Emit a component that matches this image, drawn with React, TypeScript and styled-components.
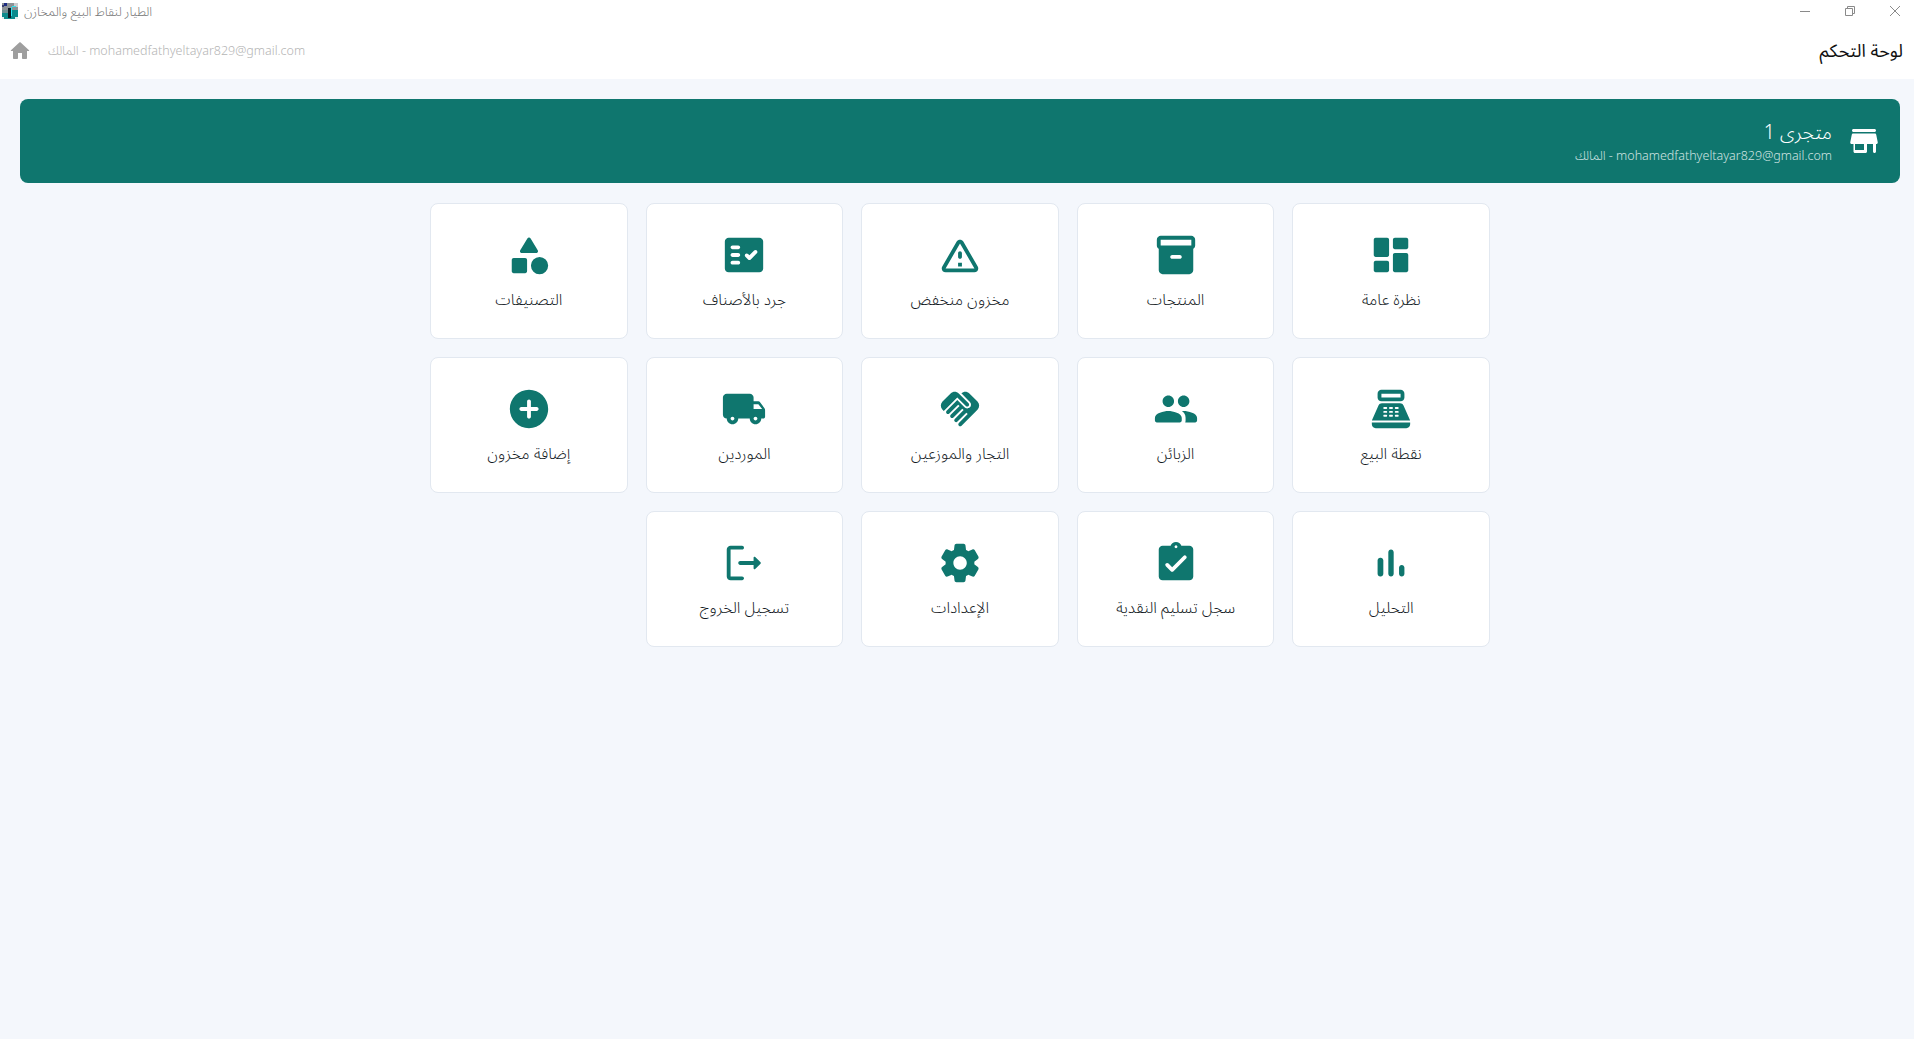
import React from 'react';
import styled, { createGlobalStyle } from 'styled-components';

const TEAL = '#0f766e';
const FONT = `"Noto Sans Arabic", "Cairo", "Open Sans", "DejaVu Sans", sans-serif`;

const Global = createGlobalStyle`
  html, body { margin: 0; padding: 0; height: 100%; overflow: hidden; background: #f4f7fc; }
  #root { width: 1914px; height: 1039px; overflow: hidden; }
`;

const Page = styled.div`
  width: 1920px;
  height: 1039px;
  display: flex;
  flex-direction: column;
  background: #f4f7fc;
  font-family: ${FONT};
`;
const TitleBar = styled.div`
  width: 1914px;
  height: 22px;
  background: #fff;
  display: flex;
  align-items: center;
  padding-left: 2px;
  box-sizing: border-box;
  gap: 6px;
`;
const TitleText = styled.span`
  margin-top: 2px;
  font-size: 12.5px;
  line-height: 20px;
  font-weight: 300;
  color: #757575;
  direction: rtl;
`;
const Controls = styled.div`
  margin-left: auto;
  display: flex;
  align-items: center;
  gap: 35px;
  padding-right: 14px;
  color: #8a8a8a;
`;
const AppBar = styled.div`
  width: 1914px;
  height: 57px;
  box-sizing: border-box;
  background: #fff;
  display: flex;
  align-items: center;
  padding: 1px 11px 0 8px;
`;
const Identity = styled.span`
  margin-left: 16px;
  font-size: 12.5px;
  font-weight: 300;
  color: #b5b5b5;
`;
const PageTitle = styled.h1`
  margin: 0 0 0 auto;
  font-size: 18px;
  font-weight: 400;
  color: #111;
  direction: rtl;
`;
const Content = styled.main`
  padding: 20px;
  display: flex;
  flex-direction: column;
  align-items: center;
`;
const Banner = styled.section`
  align-self: stretch;
  height: 84px;
  box-sizing: border-box;
  background: ${TEAL};
  border-radius: 8px;
  display: flex;
  align-items: center;
  justify-content: flex-end;
  padding-right: 18px;
  gap: 14px;
  color: #fff;
`;
const StoreInfo = styled.div`
  display: flex;
  flex-direction: column;
  align-items: flex-end;
  gap: 2px;
  padding-top: 1px;
`;
const StoreName = styled.div`
  font-size: 19.5px;
  font-weight: 300;
  line-height: 27px;
  direction: rtl;
`;
const StoreMail = styled.div`
  font-size: 12.5px;
  font-weight: 300;
  line-height: 16px;
  color: #cfe3e1;
`;
const Grid = styled.div`
  width: 1060px;
  margin-top: 20px;
  display: grid;
  grid-template-columns: repeat(5, 1fr);
  gap: 18px;
  direction: rtl;
`;
const Card = styled.button`
  height: 136px;
  box-sizing: border-box;
  padding: 28px 0 0;
  background: #fff;
  border: 1px solid #e2e8f0;
  border-radius: 8px;
  display: flex;
  flex-direction: column;
  align-items: center;
  gap: 10px;
  font-family: inherit;
`;
const Label = styled.span`
  font-size: 15.8px;
  font-weight: 300;
  line-height: 24px;
  color: #111722;
`;
const Glyph = styled.svg<{ $size: number; $color: string }>`
  width: ${p => p.$size}px;
  height: ${p => p.$size}px;
  fill: ${p => p.$color};
  flex: none;
`;

const Icon = ({ d, size = 46, color = TEAL }: { d: string; size?: number; color?: string }) => (
  <Glyph viewBox="0 0 24 24" $size={size} $color={color}><path d={d} /></Glyph>
);

const P = {
  dashboard: 'M4 13h6c.55 0 1-.45 1-1V4c0-.55-.45-1-1-1H4c-.55 0-1 .45-1 1v8c0 .55.45 1 1 1zm0 8h6c.55 0 1-.45 1-1v-4c0-.55-.45-1-1-1H4c-.55 0-1 .45-1 1v4c0 .55.45 1 1 1zm10 0h6c.55 0 1-.45 1-1v-8c0-.55-.45-1-1-1h-6c-.55 0-1 .45-1 1v8c0 .55.45 1 1 1zM13 4v4c0 .55.45 1 1 1h6c.55 0 1-.45 1-1V4c0-.55-.45-1-1-1h-6c-.55 0-1 .45-1 1z',
  inventory: 'M20 2H4c-1 0-2 .9-2 2v3.01c0 .72.43 1.34 1 1.69V20c0 1.1 1.1 2 2 2h14c.9 0 2-.9 2-2V8.7c.57-.35 1-.97 1-1.69V4c0-1.1-1-2-2-2zm-6 12h-4c-.55 0-1-.45-1-1s.45-1 1-1h4c.55 0 1 .45 1 1s-.45 1-1 1zm6-7H4V4h16v3z',
  warning: 'M12 5.99 19.53 19H4.47L12 5.99M2.74 18c-.77 1.33.19 3 1.73 3h15.06c1.54 0 2.5-1.67 1.73-3L13.73 4.99c-.77-1.33-2.69-1.33-3.46 0L2.74 18zM11 11v2c0 .55.45 1 1 1s1-.45 1-1v-2c0-.55-.45-1-1-1s-1 .45-1 1zm0 5h2v2h-2z',
  fact: 'M20 3H4c-1.1 0-2 .9-2 2v14c0 1.1.9 2 2 2h16c1.1 0 2-.9 2-2V5c0-1.1-.9-2-2-2zM9 17H6c-.55 0-1-.45-1-1s.45-1 1-1h3c.55 0 1 .45 1 1s-.45 1-1 1zm0-4H6c-.55 0-1-.45-1-1s.45-1 1-1h3c.55 0 1 .45 1 1s-.45 1-1 1zm0-4H6c-.55 0-1-.45-1-1s.45-1 1-1h3c.55 0 1 .45 1 1s-.45 1-1 1zm9.7 2.12-3.17 3.17c-.39.39-1.03.39-1.42 0l-1.41-1.42c-.39-.39-.39-1.02 0-1.41s1.02-.39 1.41 0l.71.71 2.47-2.47c.39-.39 1.02-.39 1.41 0l.01.01c.38.39.38 1.03-.01 1.41z',
  category: 'M11.15 3.4 7.43 9.48c-.41.66.07 1.52.85 1.52h7.43c.78 0 1.26-.86.85-1.52L12.85 3.4c-.39-.64-1.31-.64-1.7 0zM13 17.5a4.5 4.5 0 1 0 9 0a4.5 4.5 0 1 0-9 0zM4 21.5h6c.55 0 1-.45 1-1v-6c0-.55-.45-1-1-1H4c-.55 0-1 .45-1 1v6c0 .55.45 1 1 1z',
  pos: 'M17 2H7c-1.1 0-2 .9-2 2v2c0 1.1.9 2 2 2h10c1.1 0 2-.9 2-2V4c0-1.1-.9-2-2-2zm0 4H7V4h10v2zm3 16H4c-1.1 0-2-.9-2-2v-1h20v1c0 1.1-.9 2-2 2zm-1.47-11.81C18.21 9.47 17.49 9 16.7 9H7.3c-.79 0-1.51.47-1.83 1.19L2 18h20l-3.47-7.81zM9.5 16h-1c-.28 0-.5-.22-.5-.5s.22-.5.5-.5h1c.28 0 .5.22.5.5s-.22.5-.5.5zm0-2h-1c-.28 0-.5-.22-.5-.5s.22-.5.5-.5h1c.28 0 .5.22.5.5s-.22.5-.5.5zm0-2h-1c-.28 0-.5-.22-.5-.5s.22-.5.5-.5h1c.28 0 .5.22.5.5s-.22.5-.5.5zm3 4h-1c-.28 0-.5-.22-.5-.5s.22-.5.5-.5h1c.28 0 .5.22.5.5s-.22.5-.5.5zm0-2h-1c-.28 0-.5-.22-.5-.5s.22-.5.5-.5h1c.28 0 .5.22.5.5s-.22.5-.5.5zm0-2h-1c-.28 0-.5-.22-.5-.5s.22-.5.5-.5h1c.28 0 .5.22.5.5s-.22.5-.5.5zm3 4h-1c-.28 0-.5-.22-.5-.5s.22-.5.5-.5h1c.28 0 .5.22.5.5s-.22.5-.5.5zm0-2h-1c-.28 0-.5-.22-.5-.5s.22-.5.5-.5h1c.28 0 .5.22.5.5s-.22.5-.5.5zm0-2h-1c-.28 0-.5-.22-.5-.5s.22-.5.5-.5h1c.28 0 .5.22.5.5s-.22.5-.5.5z',
  people: 'M16 11c1.66 0 2.99-1.34 2.99-3S17.66 5 16 5s-3 1.34-3 3 1.34 3 3 3zm-8 0c1.66 0 2.99-1.34 2.99-3S9.66 5 8 5 5 6.34 5 8s1.34 3 3 3zm0 2c-2.33 0-7 1.17-7 3.5V18c0 .55.45 1 1 1h12c.55 0 1-.45 1-1v-1.5c0-2.33-4.67-3.5-7-3.5zm8 0c-.29 0-.62.02-.97.05.02.01.03.03.04.04 1.14.83 1.93 1.94 1.93 3.41V18c0 .35-.07.69-.18 1H22c.55 0 1-.45 1-1v-1.5c0-2.33-4.67-3.5-7-3.5z',
  handshake: 'M16.48 10.41c-.39.39-1.04.39-1.43 0l-4.47-4.46-7.05 7.04-.66-.63c-1.17-1.17-1.17-3.07 0-4.24l4.24-4.24c1.17-1.17 3.07-1.17 4.24 0L16.48 9c.39.39.39 1.02 0 1.41zm.7-2.12c.78.78.78 2.05 0 2.83-1.27 1.27-2.61.22-2.83 0l-3.76-3.76-5.57 5.57c-.39.39-.39 1.02 0 1.41.39.39 1.02.39 1.42 0l4.62-4.62.71.71-4.62 4.62c-.39.39-.39 1.02 0 1.41.39.39 1.02.39 1.42 0l4.62-4.62.71.71-4.62 4.62c-.39.39-.39 1.02 0 1.41.39.39 1.02.39 1.41 0l4.62-4.62.71.71-4.62 4.62c-.39.39-.39 1.02 0 1.41.39.39 1.02.39 1.41 0l8.32-8.34c1.17-1.17 1.17-3.07 0-4.24l-4.24-4.24c-1.15-1.15-3.01-1.17-4.18-.06l4.48 4.48z',
  truck: 'M19.5 8H17V6c0-1.1-.9-2-2-2H3c-1.1 0-2 .9-2 2v9c0 1.1.9 2 2 2 0 1.66 1.34 3 3 3s3-1.34 3-3h6c0 1.66 1.34 3 3 3s3-1.34 3-3h1c.55 0 1-.45 1-1v-3.33c0-.43-.14-.85-.4-1.2L20.3 8.4c-.19-.25-.49-.4-.8-.4zM6 18c-.55 0-1-.45-1-1s.45-1 1-1 1 .45 1 1-.45 1-1 1zm13.5-8.5 1.96 2.5H17V9.5h2.5zM18 18c-.55 0-1-.45-1-1s.45-1 1-1 1 .45 1 1-.45 1-1 1z',
  add: 'M12 2C6.48 2 2 6.48 2 12s4.48 10 10 10 10-4.48 10-10S17.52 2 12 2zm4 11h-3v3c0 .55-.45 1-1 1s-1-.45-1-1v-3H8c-.55 0-1-.45-1-1s.45-1 1-1h3V8c0-.55.45-1 1-1s1 .45 1 1v3h3c.55 0 1 .45 1 1s-.45 1-1 1z',
  bars: 'M6.4 9.2h.2c.77 0 1.4.63 1.4 1.4v7c0 .77-.63 1.4-1.4 1.4h-.2c-.77 0-1.4-.63-1.4-1.4v-7c0-.77.63-1.4 1.4-1.4zM12 5c.77 0 1.4.63 1.4 1.4v11.2c0 .77-.63 1.4-1.4 1.4s-1.4-.63-1.4-1.4V6.4c0-.77.63-1.4 1.4-1.4zm5.6 8c.77 0 1.4.63 1.4 1.4v3.2c0 .77-.63 1.4-1.4 1.4s-1.4-.63-1.4-1.4v-3.2c0-.77.63-1.4 1.4-1.4z',
  clipboard: 'M19 3h-4.18C14.4 1.84 13.3 1 12 1c-1.3 0-2.4.84-2.82 2H5c-1.1 0-2 .9-2 2v14c0 1.1.9 2 2 2h14c1.1 0 2-.9 2-2V5c0-1.1-.9-2-2-2zm-7-.25c.22 0 .41.1.55.25.12.13.2.31.2.5 0 .41-.34.75-.75.75s-.75-.34-.75-.75c0-.19.08-.37.2-.5.14-.15.33-.25.55-.25zM9.29 16.29 6.7 13.7a.9959.9959 0 0 1 0-1.41c.39-.39 1.02-.39 1.41 0L10 14.17l5.88-5.88c.39-.39 1.02-.39 1.41 0 .39.39.39 1.02 0 1.41l-6.59 6.59c-.38.39-1.02.39-1.41 0z',
  settings: 'M19.5 12c0-.23-.01-.45-.03-.68l1.86-1.41c.4-.3.51-.86.26-1.3l-1.87-3.23c-.25-.44-.79-.62-1.25-.42l-2.15.91c-.37-.26-.76-.49-1.17-.68l-.29-2.31c-.06-.5-.49-.88-.99-.88h-3.73c-.51 0-.94.38-1 .88l-.29 2.31c-.41.19-.8.42-1.17.68l-2.15-.91c-.46-.2-1-.02-1.25.42L2.41 8.62c-.25.44-.14.99.26 1.3l1.86 1.41c-.02.22-.03.44-.03.67s.01.45.03.68l-1.86 1.41c-.4.3-.51.86-.26 1.3l1.87 3.23c.25.44.79.62 1.25.42l2.15-.91c.37.26.76.49 1.17.68l.29 2.31c.06.5.49.88.99.88h3.73c.5 0 .93-.38.99-.88l.29-2.31c.41-.19.8-.42 1.17-.68l2.15.91c.46.2 1 .02 1.25-.42l1.87-3.23c.25-.44.14-.99-.26-1.3l-1.86-1.41c.03-.23.04-.45.04-.68zm-7.46 3.5c-1.93 0-3.5-1.57-3.5-3.5s1.57-3.5 3.5-3.5 3.5 1.57 3.5 3.5-1.57 3.5-3.5 3.5z',
  logout: 'M5 5h6c.55 0 1-.45 1-1s-.45-1-1-1H5c-1.1 0-2 .9-2 2v14c0 1.1.9 2 2 2h6c.55 0 1-.45 1-1s-.45-1-1-1H5V5zM20.65 11.65l-2.79-2.79a.501.501 0 0 0-.86.35V11h-7c-.55 0-1 .45-1 1s.45 1 1 1h7v1.79c0 .45.54.67.85.35l2.79-2.79c.2-.19.2-.51.01-.7z',
  store: 'M5 6h14c.55 0 1-.45 1-1s-.45-1-1-1H5c-.55 0-1 .45-1 1s.45 1 1 1zm15.16 1.8c-.09-.46-.5-.8-.98-.8H4.82c-.48 0-.89.34-.98.8l-1 5c-.12.62.35 1.2.98 1.2H5v5c0 .55.45 1 1 1h7c.55 0 1-.45 1-1v-5h4v5c0 .55.45 1 1 1s1-.45 1-1v-5h.18c.63 0 1.1-.58.98-1.2l-1-5zM12 18H6v-4h6v4z',
  home: 'M10 19v-5h4v5c0 .55.45 1 1 1h3c.55 0 1-.45 1-1v-7h1.7c.46 0 .68-.57.33-.87L12.67 3.6c-.38-.34-.96-.34-1.34 0l-8.36 7.53c-.34.3-.13.87.33.87H5v7c0 .55.45 1 1 1h3c.55 0 1-.45 1-1z',
};

const items: { label: string; d: string }[] = [
  { label: 'نظرة عامة', d: P.dashboard },
  { label: 'المنتجات', d: P.inventory },
  { label: 'مخزون منخفض', d: P.warning },
  { label: 'جرد بالأصناف', d: P.fact },
  { label: 'التصنيفات', d: P.category },
  { label: 'نقطة البيع', d: P.pos },
  { label: 'الزبائن', d: P.people },
  { label: 'التجار والموزعين', d: P.handshake },
  { label: 'الموردين', d: P.truck },
  { label: 'إضافة مخزون', d: P.add },
  { label: 'التحليل', d: P.bars },
  { label: 'سجل تسليم النقدية', d: P.clipboard },
  { label: 'الإعدادات', d: P.settings },
  { label: 'تسجيل الخروج', d: P.logout },
];

const AppLogo = () => (
  <svg width="16" height="16" viewBox="0 0 16 16" shapeRendering="crispEdges">
    <rect width="16" height="16" fill="#0b8a8c" />
    <rect width="16" height="7" fill="#8d9296" />
    <rect x="12" y="0" width="4" height="4" fill="#c9cccf" />
    <rect x="2" y="0" width="3" height="3" fill="#1b2a80" />
    <rect x="0" y="2" width="2" height="2" fill="#3a3f70" />
    <rect x="6" y="5" width="3" height="10" fill="#0c1a24" />
    <rect x="9" y="4" width="1" height="9" fill="#2ce6f0" />
    <rect x="10" y="3" width="4" height="1" fill="#2ce6f0" />
    <rect x="0" y="7" width="6" height="3" fill="#6b8f93" />
    <rect x="0" y="14" width="2" height="2" fill="#dfeeee" />
    <rect x="13" y="14" width="3" height="2" fill="#dfeeee" />
  </svg>
);

export default function App() {
  return (
    <Page>
      <Global />
      <TitleBar>
        <AppLogo />
        <TitleText>الطيار لنقاط البيع والمخازن</TitleText>
        <Controls>
          <svg width="10" height="10" viewBox="0 0 10 10" fill="none" stroke="currentColor"><path d="M0 5.5h10" /></svg>
          <svg width="10" height="10" viewBox="0 0 10 10" fill="none" stroke="currentColor"><path d="M.5 2.5h7v7h-7zM2.5 2.5v-2h7v7h-2" /></svg>
          <svg width="10" height="10" viewBox="0 0 10 10" fill="none" stroke="currentColor"><path d="M0 0l10 10M10 0L0 10" /></svg>
        </Controls>
      </TitleBar>
      <AppBar>
        <Icon d={P.home} size={24} color="#9e9e9e" />
        <Identity dir="ltr"><bdi>المالك</bdi> - mohamedfathyeltayar829@gmail.com</Identity>
        <PageTitle>لوحة التحكم</PageTitle>
      </AppBar>
      <Content>
        <Banner>
          <StoreInfo>
            <StoreName>متجرى 1</StoreName>
            <StoreMail dir="ltr"><bdi>المالك</bdi> - mohamedfathyeltayar829@gmail.com</StoreMail>
          </StoreInfo>
          <Icon d={P.store} size={36} color="#fff" />
        </Banner>
        <Grid>
          {items.map(it => (
            <Card key={it.label}>
              <Icon d={it.d} />
              <Label>{it.label}</Label>
            </Card>
          ))}
        </Grid>
      </Content>
    </Page>
  );
}
